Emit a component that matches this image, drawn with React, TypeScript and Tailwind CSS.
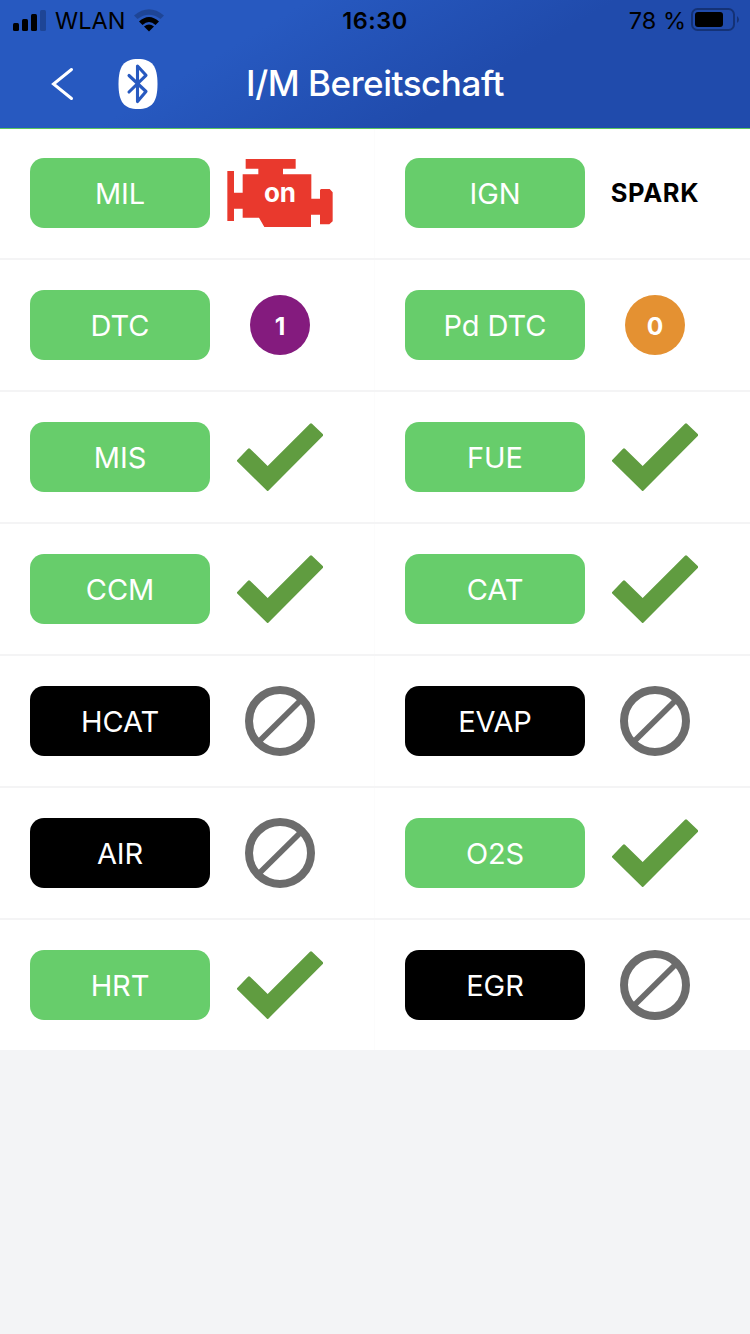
type Status = 'engine' | 'spark' | 'one' | 'zero' | 'check' | 'none';
type Monitor = { label: string; status: Status };

const rows: Monitor[][] = [
  [{ label: 'MIL', status: 'engine' }, { label: 'IGN', status: 'spark' }],
  [{ label: 'DTC', status: 'one' }, { label: 'Pd DTC', status: 'zero' }],
  [{ label: 'MIS', status: 'check' }, { label: 'FUE', status: 'check' }],
  [{ label: 'CCM', status: 'check' }, { label: 'CAT', status: 'check' }],
  [{ label: 'HCAT', status: 'none' }, { label: 'EVAP', status: 'none' }],
  [{ label: 'AIR', status: 'none' }, { label: 'O2S', status: 'check' }],
  [{ label: 'HRT', status: 'check' }, { label: 'EGR', status: 'none' }],
];

function StatusMark({ status }: { status: Status }) {
  switch (status) {
    case 'engine':
      return (
        <div className="relative flex h-[68px] w-[106px] items-center justify-center">
          <svg className="absolute inset-0 h-[68px] w-[106px]" viewBox="51 42 318 204" fill="#e9392d">
            <path d="M107 42H257V71H219V88H304V161H330V135L333 132H359L368 142V229L358 238H330V209H303V246H163L147 218H98V191H72V228H52V78H72V143H98V88H145V71H107Z" />
          </svg>
          <span className="relative text-[26px] leading-8 font-bold text-white">on</span>
        </div>
      );
    case 'spark':
      return <span className="text-[25.5px] leading-8 font-bold tracking-[0.7px] text-black">SPARK</span>;
    case 'one':
      return (
        <span className="flex size-[60px] items-center justify-center rounded-full bg-[#841b7e] pt-[2px] text-[24.5px] font-bold text-white">1</span>
      );
    case 'zero':
      return (
        <span className="flex size-[60px] items-center justify-center rounded-full bg-[#e49132] pt-[2px] text-[24.5px] font-bold text-white">0</span>
      );
    case 'check':
      return (
        <svg className="h-[70px] w-[88px]" viewBox="48 36 264 210" fill="#609c40">
          <path d="M51 151L84 116Q87 113 90 116L143 168L270 41Q273 38 276 41L309 73V77L145 242Q143 244 141 242L51 154Z" />
        </svg>
      );
    case 'none':
      return (
        <svg className="size-[70px]" viewBox="0 0 70 70" fill="none" stroke="#6c6c6c">
          <circle cx="35" cy="35" r="31" strokeWidth="8" />
          <path d="M15 54.5L55 15" strokeWidth="5.8" />
        </svg>
      );
  }
}

function Cell({ label, status }: Monitor) {
  return (
    <div className="flex h-[130px] w-[375px] items-center pl-[30px]">
      <div
        className={`flex h-[70px] w-[180px] items-center justify-center rounded-[14px] text-[29px] font-normal tracking-[-0.1px] text-white ${
          status === 'none' ? 'bg-black' : 'bg-[#67cd6b]'
        }`}
      >
        <span className="mt-[2px]">{label}</span>
      </div>
      <div className="flex w-[140px] shrink-0 items-center justify-center">
        <StatusMark status={status} />
      </div>
    </div>
  );
}

export default function App() {
  return (
    <div className="h-[1334px] w-[750px] overflow-hidden bg-[#f3f4f6] font-['Inter',sans-serif]">
      <header className="relative z-10 h-[128px] bg-[linear-gradient(149deg,#2759c0_0%,#2759c0_32%,#204bac_64%,#204bac_100%)] shadow-[0_1px_0_#5cc65e]">
        <div className="grid h-10 grid-cols-[250px_250px_250px] items-center text-black">
          <div className="flex items-center pl-[13px]">
            <svg className="h-[22px] w-[34px] shrink-0" viewBox="0 0 34 22">
              <rect x="0" y="14" width="6" height="8" rx="1.5" />
              <rect x="9" y="10" width="6" height="12" rx="1.5" />
              <rect x="18" y="5" width="6" height="17" rx="1.5" />
              <rect x="27" y="1" width="6" height="21" rx="1.5" opacity=".22" />
            </svg>
            <span className="mt-[2px] ml-[8px] w-[79px] text-[23.5px] leading-9">WLAN</span>
            <svg className="h-[23px] w-[30px] shrink-0" viewBox="0 0 30 23">
              <path d="M0 6.5Q15-6 30 6.5L26.5 10Q15 1.5 3.5 10Z" opacity=".22" />
              <path d="M5 12.5Q15 3.5 25 12.5L21.5 16Q15 10 8.5 16Z" />
              <path d="M10 17.5Q15 13.5 20 17.5L15 22.5Z" />
            </svg>
          </div>
          <div className="mt-[2px] text-center text-[23.5px] leading-9 font-semibold tracking-[0.5px]">16:30</div>
          <div className="flex items-center justify-end pr-[11px]">
            <span className="mt-[2px] mr-[5px] text-[23.5px] leading-9">78 %</span>
            <svg className="h-[24px] w-[48px] shrink-0" viewBox="0 0 48 24">
              <rect x="1" y="1" width="42" height="21" rx="5.5" fill="none" stroke="#143276" strokeWidth="2" />
              <rect x="4" y="4" width="28" height="15" rx="3" />
              <path d="M46 8Q48 9.5 48 11.5T46 15Z" fill="#143276" />
            </svg>
          </div>
        </div>
        <div className="grid h-[88px] grid-cols-[230px_290px_230px] items-center text-white">
          <div className="flex items-center pl-[51px]">
            <svg className="h-[34px] w-[24px]" viewBox="0 0 24 34" fill="none" stroke="white" strokeWidth="3" strokeLinecap="round">
              <path d="M20.5 2.5L2.5 17L20.5 31.5" />
            </svg>
            <svg className="ml-[43px] h-[50px] w-[40px]" viewBox="0 0 40 50" fill="none">
              <path d="M20 0C34 0 39.5 7 39.5 25S34 50 20 50S.5 43 .5 25S6 0 20 0Z" fill="white" />
              <path d="M11 16.5L28 32.5L19.5 42.5V7L28 16.3L11 33" stroke="#2759c0" strokeWidth="3.1" strokeLinecap="round" strokeLinejoin="round" />
            </svg>
          </div>
          <h1 className="-mt-[2px] text-center text-[35px] leading-[44px] font-medium tracking-[-0.45px]">I/M Bereitschaft</h1>
        </div>
      </header>
      <main className="flex flex-col gap-[2px] bg-[#f4f4f5]">
        {rows.map((row) => (
          <div key={row[0].label} className="flex divide-x divide-[#fcfcfc] bg-white">
            {row.map((monitor) => (
              <Cell key={monitor.label} {...monitor} />
            ))}
          </div>
        ))}
      </main>
    </div>
  );
}
